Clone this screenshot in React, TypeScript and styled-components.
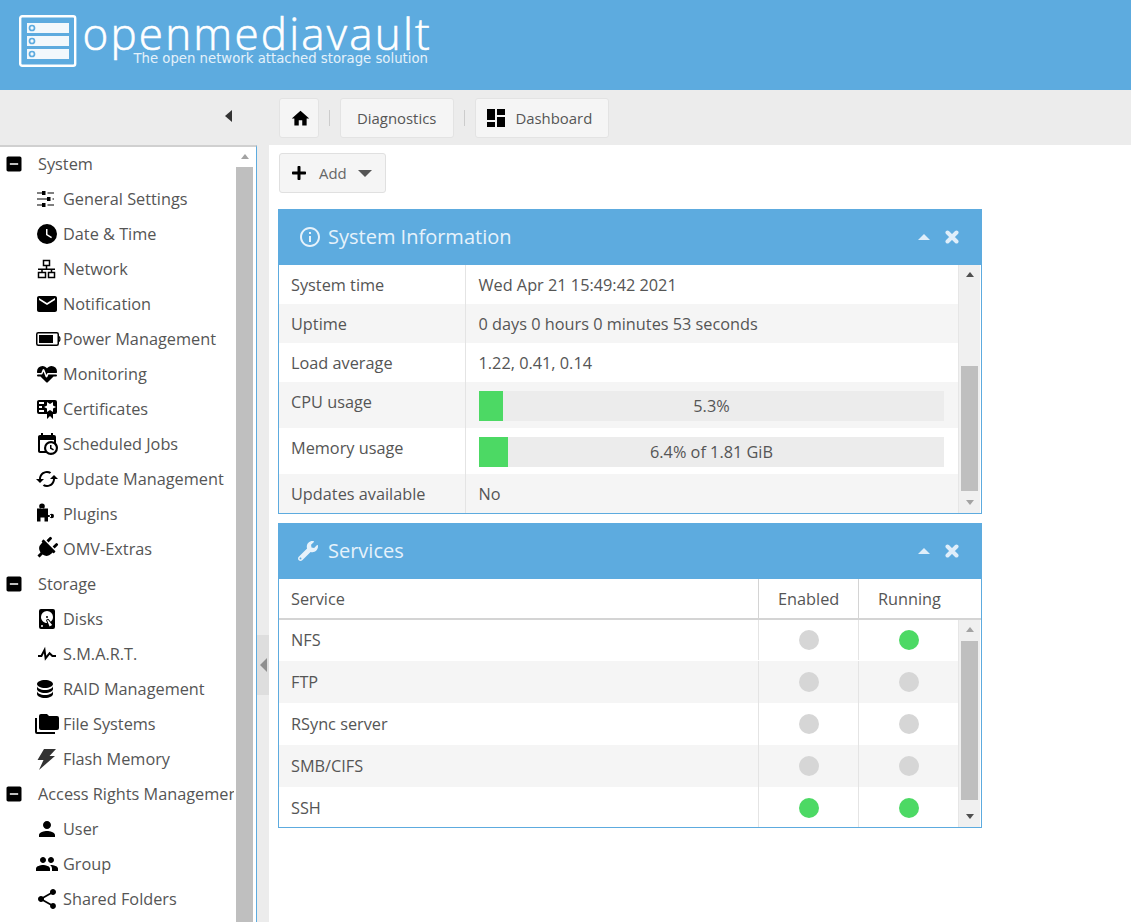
import type { ReactNode } from 'react';
import styled, { createGlobalStyle } from 'styled-components';
import {
  MdCached,
  MdEmail,
  MdGroup,
  MdHome,
  MdIndeterminateCheckBox,
  MdInfoOutline,
  MdPerson,
  MdShare,
} from 'react-icons/md';
import { FaPlug, FaPlus, FaWrench } from 'react-icons/fa';

const BLUE = '#5dabdf';

const GlobalStyle = createGlobalStyle`
  html, body {
    margin: 0;
    height: 100%;
    overflow: hidden;
    background: #fff;
    font-family: "Open Sans", "Liberation Sans", sans-serif;
    color: #555;
  }
  #root { height: 100%; }
`;

const Mdi = ({ d, fill = '#000' }: { d: string; fill?: string }) => (
  <svg viewBox="0 0 24 24" width="24" height="24" fill={fill}>
    <path d={d} />
  </svg>
);

const tune = 'M2,5.4H7V4H10.5V8H7V6.6H2V5.4M12.5,5.4H19V6.6H12.5V5.4M2,11.4H12V10H15.5V14H12V12.6H2V11.4M17.5,11.4H19V12.6H17.5V11.4M2,17.4H7V16H10.5V20H7V18.6H2V17.4M12.5,17.4H19V18.6H12.5V17.4Z';
const clock = 'M12,2A10,10 0 0,0 2,12A10,10 0 0,0 12,22A10,10 0 0,0 22,12A10,10 0 0,0 12,2M16.2,16.2L11,13V7H12.5V12.2L17,14.9L16.2,16.2Z';
const heartPulse = 'M7.5,4A5.5,5.5 0 0,0 2,9.5C2,10 2.09,10.5 2.22,11H6.3L7.57,7.63C7.87,6.83 9.05,6.75 9.43,7.63L11.5,13L12.09,11.58C12.22,11.25 12.57,11 13,11H21.78C21.91,10.5 22,10 22,9.5A5.5,5.5 0 0,0 16.5,4C14.64,4 13,4.93 12,6.34C11,4.93 9.36,4 7.5,4M3,12.5A1,1 0 0,0 2,13.5A1,1 0 0,0 3,14.5H5.44L11,20C12,20.9 12,20.9 13,20L18.56,14.5H21A1,1 0 0,0 22,13.5A1,1 0 0,0 21,12.5H13.4L12.47,14.8C12.07,15.81 10.92,15.67 10.55,14.83L8.5,9.5L7.54,11.83C7.39,12.21 7.05,12.5 6.6,12.5H3Z';
const certificate = 'M4,3C2.89,3 2,3.89 2,5V15A2,2 0 0,0 4,17H12V22L15,19L18,22V17H20A2,2 0 0,0 22,15V8L22,6V5A2,2 0 0,0 20,3H16V3H4M12,5L15,7L18,5V8.5L21,10L18,11.5V15L15,13L12,15V11.5L9,10L12,8.5V5M4,5H9V7H4V5M4,9H7V11H4V9M4,13H9V15H4V13Z';
const calendarClock = 'M15,13H16.5V15.82L18.94,17.23L18.19,18.53L15,16.69V13M19,8H5V19H9.67C9.24,18.09 9,17.07 9,16A7,7 0 0,1 16,9C17.07,9 18.09,9.24 19,9.67V8M5,21C3.89,21 3,20.1 3,19V5C3,3.89 3.89,3 5,3H6V1H8V3H16V1H18V3H19A2,2 0 0,1 21,5V11.1C22.24,12.36 23,14.09 23,16A7,7 0 0,1 16,23C14.09,23 12.36,22.24 11.1,21H5M16,11.15A4.85,4.85 0 0,0 11.15,16C11.15,18.68 13.32,20.85 16,20.85A4.85,4.85 0 0,0 20.85,16C20.85,13.32 18.68,11.15 16,11.15Z';
const puzzle = 'M2,6.5H13V19.5H9.5V15.5H5.5V19.5H2ZM7,1.5A2.8,2.8 0 1 0 7,7.1A2.8,2.8 0 1 0 7,1.5ZM12,13H16V15H12ZM16.8,11.8A2.2,2.2 0 1 0 16.8,16.2A2.2,2.2 0 1 0 16.8,11.8Z';
const harddisk = 'M6,2H18A2,2 0 0,1 20,4V20A2,2 0 0,1 18,22H6A2,2 0 0,1 4,20V4A2,2 0 0,1 6,2M12,4A6,6 0 0,0 6,10C6,13.31 8.69,16 12.1,16L11.22,13.77C10.95,13.29 11.11,12.68 11.59,12.4L12.45,11.9C12.93,11.63 13.54,11.79 13.82,12.27L15.74,14.69C17.12,13.59 18,11.9 18,10A6,6 0 0,0 12,4M12,9A1,1 0 0,1 13,10A1,1 0 0,1 12,11A1,1 0 0,1 11,10A1,1 0 0,1 12,9M7,18A1,1 0 0,0 6,19A1,1 0 0,0 7,20A1,1 0 0,0 8,19A1,1 0 0,0 7,18M12.09,13.27L14.58,19.58L17.17,18.08L12.95,12.77L12.09,13.27Z';
const pulse = 'M3,13H5.79L10.1,4.79L11.28,13.75L14.5,9.66L17.83,13H21V15H17L14.67,12.67L9.92,18.73L8.94,11.31L7,15H3V13Z';
const database = 'M10,3C5.58,3 2,4.79 2,7C2,9.21 5.58,11 10,11C14.42,11 18,9.21 18,7C18,4.79 14.42,3 10,3M2,9V12C2,14.21 5.58,16 10,16C14.42,16 18,14.21 18,12V9C18,11.21 14.42,13 10,13C5.58,13 2,11.21 2,9M2,14V17C2,19.21 5.58,21 10,21C14.42,21 18,19.21 18,17V14C18,16.21 14.42,18 10,18C5.58,18 2,16.21 2,14Z';
const folders = 'M22,4H14L12,2H6A2,2 0 0,0 4,4V16A2,2 0 0,0 6,18H22A2,2 0 0,0 24,16V6A2,2 0 0,0 22,4M2,6H0V20A2,2 0 0,0 2,22H20V20H2V6Z';
const bolt = 'M9,2H21L14.5,9H20L4,23L8.5,13H2.5L9,2Z';
const dashboard = 'M3,3H11V14H3V3M13,3H21V9H13V3M13,11H21V21H13V11M3,16H11V21H3V16Z';

const NetworkIcon = () => (
  <svg viewBox="0 0 24 24" width="24" height="24" fill="none" stroke="#000" strokeWidth="1.5">
    <rect x="8.5" y="3.5" width="6" height="5" />
    <rect x="3.5" y="15.5" width="7" height="5" />
    <rect x="13.5" y="15.5" width="6" height="5" />
    <path d="M11.5 8.5V12M3 12.2H20M7 12V15.5M16.5 12V15.5" />
  </svg>
);

const BatteryIcon = () => (
  <BatterySvg viewBox="0 0 25 14" width="25" height="14">
    <rect x="0.75" y="0.75" width="21.5" height="12.5" rx="1.5" fill="none" stroke="#000" strokeWidth="1.5" />
    <rect x="3" y="3" width="14" height="8" fill="#000" />
    <path d="M23 4.5C24.2 5.5 24.2 8.5 23 9.5" fill="none" stroke="#000" strokeWidth="1.3" />
  </BatterySvg>
);

const PlugIcon = () => <PlugGlyph size={23} color="#000" />;

type NavEntry = { label: string; icon?: ReactNode };

const nav: NavEntry[] = [
  { label: 'System' },
  { label: 'General Settings', icon: <Mdi d={tune} /> },
  { label: 'Date & Time', icon: <Mdi d={clock} /> },
  { label: 'Network', icon: <NetworkIcon /> },
  { label: 'Notification', icon: <MdEmail size={24} color="#000" /> },
  { label: 'Power Management', icon: <BatteryIcon /> },
  { label: 'Monitoring', icon: <Mdi d={heartPulse} /> },
  { label: 'Certificates', icon: <Mdi d={certificate} /> },
  { label: 'Scheduled Jobs', icon: <Mdi d={calendarClock} /> },
  { label: 'Update Management', icon: <MdCached size={24} color="#000" /> },
  { label: 'Plugins', icon: <Mdi d={puzzle} /> },
  { label: 'OMV-Extras', icon: <PlugIcon /> },
  { label: 'Storage' },
  { label: 'Disks', icon: <Mdi d={harddisk} /> },
  { label: 'S.M.A.R.T.', icon: <Mdi d={pulse} /> },
  { label: 'RAID Management', icon: <Mdi d={database} /> },
  { label: 'File Systems', icon: <Mdi d={folders} /> },
  { label: 'Flash Memory', icon: <Mdi d={bolt} fill="#333" /> },
  { label: 'Access Rights Management' },
  { label: 'User', icon: <MdPerson size={24} color="#000" /> },
  { label: 'Group', icon: <MdGroup size={24} color="#000" /> },
  { label: 'Shared Folders', icon: <MdShare size={24} color="#000" /> },
];

const services = [
  { name: 'NFS', enabled: false, running: true },
  { name: 'FTP', enabled: false, running: false },
  { name: 'RSync server', enabled: false, running: false },
  { name: 'SMB/CIFS', enabled: false, running: false },
  { name: 'SSH', enabled: true, running: true },
];

const Panel = ({ title, icon, children }: { title: string; icon: ReactNode; children: ReactNode }) => (
  <PanelBox>
    <PanelHeader>
      <PanelIcon>{icon}</PanelIcon>
      <PanelTitle>{title}</PanelTitle>
      <CollapseTool />
      <CloseTool>
        <svg viewBox="0 0 14 14" width="14" height="14">
          <path d="M2.5 2.5L11.5 11.5M11.5 2.5L2.5 11.5" stroke="#dfeefa" strokeWidth="4" strokeLinecap="round" />
        </svg>
      </CloseTool>
    </PanelHeader>
    {children}
  </PanelBox>
);

const Scrollbar = ({ top, height }: { top: number; height: number }) => (
  <ScrollTrack>
    <ScrollArrow $up $dim={top <= 20} />
    <ThumbArea>
      <Thumb style={{ marginTop: top, height }} />
    </ThumbArea>
    <ScrollArrow $dim={top > 20} />
  </ScrollTrack>
);

const InfoRow = ({ label, tall, odd, children }: { label: string; tall?: boolean; odd?: boolean; children: ReactNode }) => (
  <Row $tall={tall} $odd={odd}>
    <RowLabel>{label}</RowLabel>
    <RowValue>{children}</RowValue>
  </Row>
);

const Progress = ({ value, text }: { value: number; text: string }) => (
  <Bar>
    <BarFill style={{ width: `${value}%` }} />
    <BarText>{text}</BarText>
  </Bar>
);

const App = () => (
  <>
    <GlobalStyle />
    <Page>
      <Banner>
        <Logo viewBox="0 0 58 52" width="58" height="52">
          <rect x="1.2" y="1.2" width="55" height="49.6" rx="2" fill="none" stroke="#fff" strokeWidth="2.4" />
          {[8, 21, 34].map(y => (
            <g key={y}>
              <rect x="8" y={y} width="42" height="10" fill="#f2f8fc" />
              <circle cx="13" cy={y + 5} r="2.5" fill="none" stroke={BLUE} strokeWidth="1.7" />
            </g>
          ))}
        </Logo>
        <Brand>
          <BrandName>openmediavault</BrandName>
          <BrandTag>The open network attached storage solution</BrandTag>
        </Brand>
      </Banner>

      <Toolbar>
        <ToolbarLeft>
          <CollapseArrow />
        </ToolbarLeft>
        <Crumbs>
          <HomeButton>
            <MdHome size={21} color="#000" />
          </HomeButton>
          <CrumbDivider />
          <CrumbButton>Diagnostics</CrumbButton>
          <CrumbDivider />
          <CrumbButton $gap>
            <svg viewBox="0 0 24 24" width="24" height="24" fill="#000">
              <path d={dashboard} />
            </svg>
            Dashboard
          </CrumbButton>
        </Crumbs>
      </Toolbar>

      <Body>
        <Sidebar>
          <NavList>
            {nav.map(entry =>
              entry.icon ? (
                <NavItem key={entry.label}>
                  <NavIcon>{entry.icon}</NavIcon>
                  <span>{entry.label}</span>
                </NavItem>
              ) : (
                <NavGroup key={entry.label}>
                  <GroupIcon>
                    <MdIndeterminateCheckBox size={20} color="#000" />
                  </GroupIcon>
                  <span>{entry.label}</span>
                </NavGroup>
              ),
            )}
          </NavList>
          <SideScroll>
            <ScrollArrow $up $dim />
            <SideThumb />
          </SideScroll>
        </Sidebar>

        <Splitter>
          <SplitHandle>
            <SplitArrow />
          </SplitHandle>
        </Splitter>

        <Content>
          <AddButton>
            <FaPlus size={16} color="#000" />
            <AddLabel>Add</AddLabel>
            <Caret />
          </AddButton>

          <Panel title="System Information" icon={<MdInfoOutline size={24} color="#e6f2fb" />}>
            <PanelBody $height={248}>
              <Rows>
                <InfoRow label="System time">Wed Apr 21 15:49:42 2021</InfoRow>
                <InfoRow label="Uptime" odd>0 days 0 hours 0 minutes 53 seconds</InfoRow>
                <InfoRow label="Load average">1.22, 0.41, 0.14</InfoRow>
                <InfoRow label="CPU usage" odd tall>
                  <Progress value={5.2} text="5.3%" />
                </InfoRow>
                <InfoRow label="Memory usage" tall>
                  <Progress value={6.3} text="6.4% of 1.81 GiB" />
                </InfoRow>
                <InfoRow label="Updates available" odd>No</InfoRow>
              </Rows>
              <Scrollbar top={81} height={125} />
            </PanelBody>
          </Panel>

          <Panel title="Services" icon={<FaWrench size={20} color="#e6f2fb" />}>
            <ServiceHead>
              <HeadCell $first>Service</HeadCell>
              <HeadCell $width={100}>Enabled</HeadCell>
              <HeadCell $width={122}>Running</HeadCell>
            </ServiceHead>
            <PanelBody $height={207}>
              <Rows>
                {services.map((service, index) => (
                  <ServiceRow key={service.name} $odd={index % 2 === 1}>
                    <ServiceName>{service.name}</ServiceName>
                    <DotCell>
                      <Dot $on={service.enabled} />
                    </DotCell>
                    <DotCell>
                      <Dot $on={service.running} />
                    </DotCell>
                  </ServiceRow>
                ))}
              </Rows>
              <Scrollbar top={1} height={159} />
            </PanelBody>
          </Panel>
        </Content>
      </Body>
    </Page>
  </>
);

const Page = styled.div`
  height: 922px;
  display: flex;
  flex-direction: column;
  overflow: hidden;
`;

const Banner = styled.header`
  height: 90px;
  flex: none;
  background: ${BLUE};
  display: flex;
  align-items: flex-start;
  padding: 15px 0 0 19px;
  box-sizing: border-box;
  gap: 7px;
`;

const Logo = styled.svg`
  flex: none;
`;

const Brand = styled.div`
  display: flex;
  flex-direction: column;
  align-items: flex-end;
  width: 348px;
  margin-top: -4px;
`;

const BrandName = styled.div`
  font-family: "Open Sans", sans-serif;
  font-weight: 300;
  font-size: 44px;
  letter-spacing: 2.2px;
  line-height: 44px;
  color: #fff;
  white-space: nowrap;
  -webkit-text-stroke: 0.6px #fff;
`;

const BrandTag = styled.div`
  font-family: "DejaVu Sans", sans-serif;
  font-size: 13.27px;
  line-height: 14px;
  margin-top: -3px;
  margin-right: 4px;
  color: #e4f1fa;
  white-space: nowrap;
`;

const Toolbar = styled.div`
  height: 55px;
  flex: none;
  background: #ececec;
  display: flex;
  align-items: flex-start;
`;

const ToolbarLeft = styled.div`
  width: 279px;
  flex: none;
  height: 52px;
  display: flex;
  align-items: center;
  justify-content: flex-end;
  padding-right: 47px;
  box-sizing: border-box;
`;

const CollapseArrow = styled.span`
  width: 0;
  height: 0;
  border-style: solid;
  border-width: 6px 7px 6px 0;
  border-color: transparent #333 transparent transparent;
`;

const Crumbs = styled.div`
  display: flex;
  align-items: center;
  padding-top: 8px;
`;

const CrumbButton = styled.div<{ $gap?: boolean }>`
  height: 40px;
  box-sizing: border-box;
  display: flex;
  align-items: center;
  gap: ${p => (p.$gap ? '7px' : '0')};
  padding: ${p => (p.$gap ? '0 15.5px 0 8.5px' : '0 16.5px 0 16px')};
  background: #f5f5f5;
  border: 1px solid #e3e3e3;
  border-radius: 3px;
  font-size: 14.9px;
  color: #555;
`;

const HomeButton = styled(CrumbButton)`
  width: 40px;
  padding: 0 0 0 10px;
`;

const CrumbDivider = styled.span`
  width: 1px;
  height: 16px;
  margin: 0 10px;
  background: #ccc;
`;

const Body = styled.div`
  flex: 1;
  min-height: 0;
  display: flex;
`;

const Sidebar = styled.aside`
  width: 257px;
  flex: none;
  box-sizing: border-box;
  display: flex;
  background: #fff;
  border-top: 2px solid #d0d0d0;
  border-right: 1px solid ${BLUE};
  overflow: hidden;
`;

const NavList = styled.nav`
  width: 236px;
  flex: none;
  overflow: hidden;
  margin-top: -1px;
`;

const NavItem = styled.div`
  width: 234px;
  height: 35px;
  box-sizing: border-box;
  overflow: hidden;
  display: flex;
  align-items: center;
  padding-left: 35px;
  color: #555;
  font-size: 16.3px;
  white-space: nowrap;
`;

const NavGroup = styled(NavItem)`
  padding-left: 4px;
`;

const NavIcon = styled.span`
  width: 28px;
  flex: none;
  display: flex;
  align-items: center;
`;

const BatterySvg = styled.svg`
  margin-left: 1px;
`;

const PlugGlyph = styled(FaPlug)`
  transform: rotate(45deg);
`;

const GroupIcon = styled.span`
  width: 34px;
  flex: none;
  display: flex;
  align-items: center;
`;

const SideScroll = styled.div`
  width: 20px;
  flex: none;
  display: flex;
  flex-direction: column;
  align-items: flex-start;
`;

const SideThumb = styled.div`
  width: 17px;
  flex: 1;
  background: #bfbfbf;
`;

const Splitter = styled.div`
  width: 12px;
  flex: none;
  background: #ececec;
  padding-top: 490px;
  box-sizing: border-box;
`;

const SplitHandle = styled.div`
  width: 12px;
  height: 60px;
  background: #dedede;
  display: flex;
  align-items: center;
  justify-content: center;
`;

const SplitArrow = styled.span`
  width: 0;
  height: 0;
  border-style: solid;
  border-width: 7px 7px 7px 0;
  border-color: transparent #8f8f8f transparent transparent;
`;

const Content = styled.main`
  flex: 1;
  min-width: 0;
  padding: 8px 0 0 9px;
  display: flex;
  flex-direction: column;
  align-items: flex-start;
`;

const AddButton = styled.div`
  width: 107px;
  height: 40px;
  margin-left: 1px;
  margin-bottom: 16px;
  box-sizing: border-box;
  display: flex;
  align-items: center;
  padding-left: 11px;
  background: #f5f5f5;
  border: 1px solid #e0e0e0;
  border-radius: 3px;
`;

const AddLabel = styled.span`
  margin-left: 12px;
  font-size: 14.9px;
  color: #666;
`;

const Caret = styled.span`
  margin-left: 11px;
  width: 0;
  height: 0;
  border-style: solid;
  border-width: 7px 7px 0 7px;
  border-color: #555 transparent transparent transparent;
`;

const PanelBox = styled.section`
  width: 704px;
  box-sizing: border-box;
  border: 1px solid ${BLUE};
  border-top: none;
  margin-bottom: 9px;
  background: #fff;
`;

const PanelHeader = styled.div`
  height: 56px;
  margin: 0 -1px;
  background: ${BLUE};
  display: flex;
  align-items: center;
  padding: 0 23px 0 20px;
`;

const PanelIcon = styled.span`
  width: 30px;
  flex: none;
  display: flex;
  align-items: center;
`;

const PanelTitle = styled.span`
  flex: 1;
  font-size: 20px;
  font-weight: 500;
  color: #e6f2fb;
  padding-bottom: 2px;
`;

const CollapseTool = styled.span`
  width: 0;
  height: 0;
  margin-right: 15px;
  border-style: solid;
  border-width: 0 6px 6px 6px;
  border-color: transparent transparent #dfeefa transparent;
`;

const CloseTool = styled.span`
  display: flex;
`;

const PanelBody = styled.div<{ $height: number }>`
  display: flex;
  height: ${p => p.$height}px;
  overflow: hidden;
`;

const Rows = styled.div`
  flex: 1;
  min-width: 0;
`;

const Row = styled.div<{ $tall?: boolean; $odd?: boolean }>`
  display: flex;
  height: ${p => (p.$tall ? 46 : 39)}px;
  background: ${p => (p.$odd ? '#f5f5f5' : '#fff')};
  font-size: 16.3px;
  color: #555;
`;

const RowLabel = styled.div`
  width: 187px;
  flex: none;
  box-sizing: border-box;
  padding: 9px 0 0 12px;
  border-right: 1px solid #e4e4e4;
`;

const RowValue = styled.div`
  flex: 1;
  min-width: 0;
  padding: 9px 14px 0 12.5px;
`;

const Bar = styled.div`
  position: relative;
  height: 30px;
  margin-left: 0.5px;
  background: #ececec;
  text-align: center;
  line-height: 30px;
`;

const BarFill = styled.div`
  position: absolute;
  left: 0;
  top: 0;
  bottom: 0;
  background: #4cd964;
`;

const BarText = styled.span`
  position: relative;
`;

const ScrollTrack = styled.div`
  width: 23px;
  flex: none;
  box-sizing: border-box;
  background: #f0f0f0;
  border-left: 1px solid #e6e6e6;
  border-right: 1px solid #fff;
  display: flex;
  flex-direction: column;
  align-items: center;
`;

const ScrollArrow = styled.span<{ $up?: boolean; $dim?: boolean }>`
  flex: none;
  display: block;
  width: 17px;
  height: 20px;
  &::before {
    content: '';
    display: block;
    width: 0;
    height: 0;
    margin: 7px auto 0;
    border-style: solid;
    border-width: ${p => (p.$up ? '0 4.5px 5px 4.5px' : '5px 4.5px 0 4.5px')};
    border-color: ${p => {
      const c = p.$dim ? '#a3a3a3' : '#505050';
      return p.$up ? `transparent transparent ${c} transparent` : `${c} transparent transparent transparent`;
    }};
  }
`;

const ThumbArea = styled.div`
  flex: 1;
  min-height: 0;
  width: 17px;
`;

const Thumb = styled.div`
  width: 17px;
  background: #bfbfbf;
`;

const ServiceHead = styled.div`
  display: flex;
  height: 41px;
  box-sizing: border-box;
  border-bottom: 2px solid #d4d4d4;
  font-size: 16.3px;
  color: #555;
`;

const HeadCell = styled.div<{ $first?: boolean; $width?: number }>`
  flex: ${p => (p.$first ? '1' : 'none')};
  width: ${p => (p.$width ? `${p.$width}px` : 'auto')};
  box-sizing: border-box;
  padding: 9px 0 0 ${p => (p.$first ? 12 : 19)}px;
  border-right: ${p => (p.$width === 122 ? 'none' : '1px solid #d4d4d4')};
`;

const ServiceRow = styled.div<{ $odd?: boolean }>`
  display: flex;
  height: 42px;
  background: ${p => (p.$odd ? '#f5f5f5' : '#fff')};
  font-size: 16.3px;
  color: #555;
  &:first-child {
    height: 40px;
    margin-bottom: 1px;
  }
`;

const ServiceName = styled.div`
  flex: 1;
  display: flex;
  align-items: center;
  padding-left: 12px;
  border-right: 1px solid #e4e4e4;
`;

const DotCell = styled.div`
  width: 100px;
  flex: none;
  box-sizing: border-box;
  display: flex;
  align-items: center;
  justify-content: center;
  border-right: 1px solid #e4e4e4;
  &:last-child {
    width: 99px;
    border-right: none;
  }
`;

const Dot = styled.span<{ $on?: boolean }>`
  width: 20px;
  height: 20px;
  border-radius: 50%;
  background: ${p => (p.$on ? '#4cd964' : '#d6d6d6')};
`;

export default App;
